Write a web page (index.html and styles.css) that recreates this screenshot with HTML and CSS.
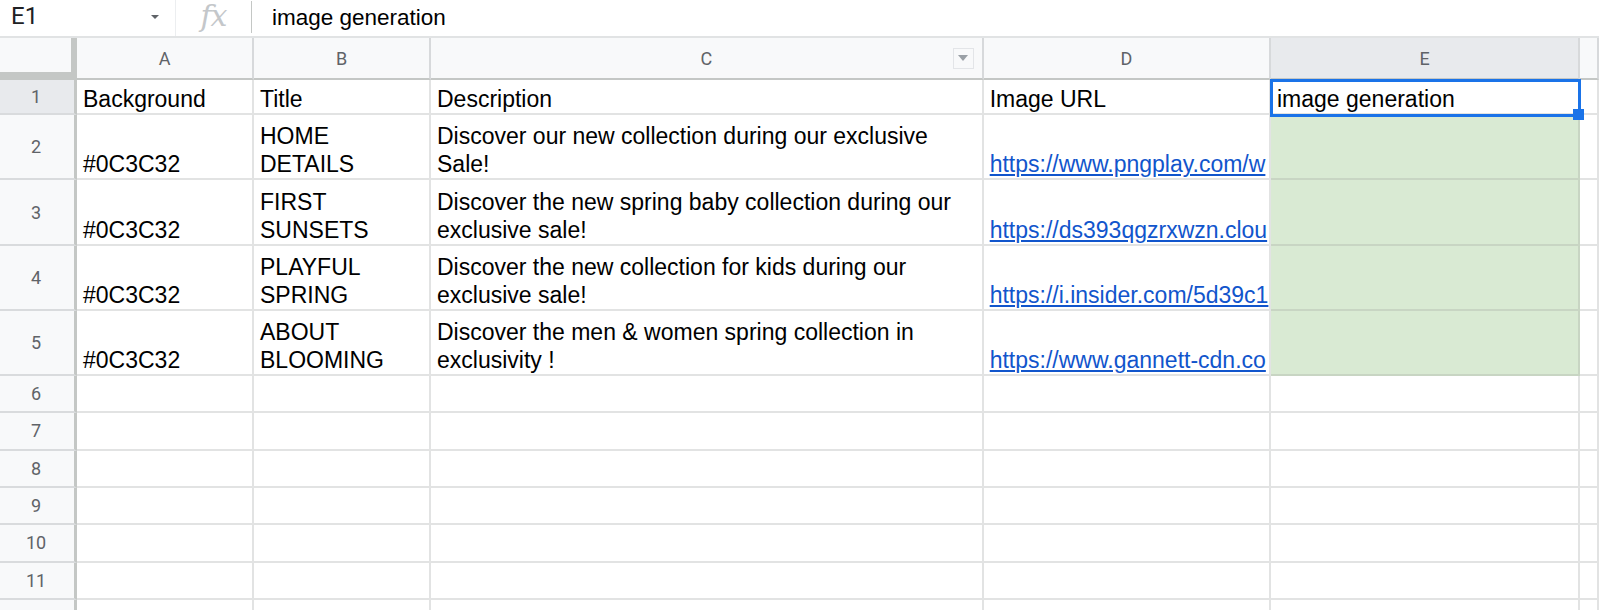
FILE: index.html
```html
<!DOCTYPE html>
<html lang="en">
<head>
<meta charset="utf-8">
<title>Sheet</title>
<link rel="stylesheet" href="styles.css">
</head>
<body>
<div class="formula-bar">
  <div class="namebox"><span>E1</span><span class="arrow"></span></div>
  <div class="fx">fx</div>
  <div class="sep"></div>
  <div class="formula-text">image generation</div>
</div>
<div class="sheet">
  <div class="grid">
    <div class="corner"></div>
    <div class="ch">A</div>
    <div class="ch">B</div>
    <div class="ch filter"><span></span><span>C</span><span class="filter-btn"><span class="tri"></span></span></div>
    <div class="ch">D</div>
    <div class="ch sel">E</div>
    <div class="ch"></div>

    <div class="rh sel">1</div>
    <div class="c">Background</div>
    <div class="c">Title</div>
    <div class="c">Description</div>
    <div class="c">Image URL</div>
    <div class="c">image generation</div>
    <div class="c"></div>

    <div class="rh">2</div>
    <div class="c">#0C3C32</div>
    <div class="c">HOME<br>DETAILS</div>
    <div class="c">Discover our new collection during our exclusive<br>Sale!</div>
    <div class="c"><a href="#">https://www.pngplay.com/w</a></div>
    <div class="c g"></div>
    <div class="c"></div>

    <div class="rh">3</div>
    <div class="c">#0C3C32</div>
    <div class="c">FIRST<br>SUNSETS</div>
    <div class="c">Discover the new spring baby collection during our<br>exclusive sale!</div>
    <div class="c"><a href="#">https://ds393qgzrxwzn.clou</a></div>
    <div class="c g"></div>
    <div class="c"></div>

    <div class="rh">4</div>
    <div class="c">#0C3C32</div>
    <div class="c">PLAYFUL<br>SPRING</div>
    <div class="c">Discover the new collection for kids during our<br>exclusive sale!</div>
    <div class="c"><a href="#">https://i.insider.com/5d39c1</a></div>
    <div class="c g"></div>
    <div class="c"></div>

    <div class="rh">5</div>
    <div class="c">#0C3C32</div>
    <div class="c">ABOUT<br>BLOOMING</div>
    <div class="c">Discover the men &amp; women spring collection in<br>exclusivity !</div>
    <div class="c"><a href="#">https://www.gannett-cdn.co</a></div>
    <div class="c g"></div>
    <div class="c"></div>

    <div class="rh">6</div><div class="c"></div><div class="c"></div><div class="c"></div><div class="c"></div><div class="c"></div><div class="c"></div>
    <div class="rh">7</div><div class="c"></div><div class="c"></div><div class="c"></div><div class="c"></div><div class="c"></div><div class="c"></div>
    <div class="rh">8</div><div class="c"></div><div class="c"></div><div class="c"></div><div class="c"></div><div class="c"></div><div class="c"></div>
    <div class="rh">9</div><div class="c"></div><div class="c"></div><div class="c"></div><div class="c"></div><div class="c"></div><div class="c"></div>
    <div class="rh">10</div><div class="c"></div><div class="c"></div><div class="c"></div><div class="c"></div><div class="c"></div><div class="c"></div>
    <div class="rh">11</div><div class="c"></div><div class="c"></div><div class="c"></div><div class="c"></div><div class="c"></div><div class="c"></div>
    <div class="rh"></div><div class="c"></div><div class="c"></div><div class="c"></div><div class="c"></div><div class="c"></div><div class="c"></div>
  </div>
  <div class="selection"></div>
  <div class="handle"></div>
</div>
</body>
</html>
```
FILE: styles.css
```css
* { box-sizing: border-box; }
html, body { margin: 0; padding: 0; }
body {
  width: 1599px;
  height: 610px;
  overflow: hidden;
  background: #ffffff;
  font-family: "Liberation Sans", Arial, sans-serif;
}

/* formula bar */
.formula-bar {
  display: flex;
  height: 38px;
  border-bottom: 2px solid #e1e3e4;
}
.namebox {
  width: 176px;
  display: flex;
  justify-content: space-between;
  align-items: flex-start;
  padding-left: 11px;
  padding-right: 16px;
  border-right: 1px solid #eceef0;
  font-family: Roboto, "Liberation Sans", sans-serif;
  font-size: 24px;
  line-height: 32px;
  color: #202124;
}
.namebox .arrow {
  margin-top: 15px;
  width: 0;
  height: 0;
  border-left: 4px solid transparent;
  border-right: 4px solid transparent;
  border-top: 4px solid #5f6368;
}
.fx {
  width: 75px;
  text-align: center;
  font-family: "DejaVu Serif", "Liberation Serif", serif;
  font-style: italic;
  font-size: 30px;
  line-height: 32px;
  letter-spacing: -1px;
  color: #c4c7ca;
}
.sep {
  width: 1px;
  height: 32px;
  margin-top: 1px;
  background: #c4c7c5;
}
.formula-text {
  padding-left: 20px;
  font-size: 22.5px;
  line-height: 35px;
  color: #000;
}

/* sheet */
.sheet { position: relative; }
.grid {
  display: grid;
  grid-template-columns: 77px 177px 177px 552.7px 287.3px 309.3px 1fr;
  grid-template-rows: 42px 35.33px repeat(4, 65.17px) repeat(7, 37.33px);
}
.corner {
  background: #f8f9fa;
  border-right: 6px solid #c4c7c5;
  border-bottom: 8px solid #c4c7c5;
}
.ch {
  background: #f8f9fa;
  border-right: 2px solid #d7d9db;
  border-bottom: 2px solid #c4c7c5;
  display: flex;
  align-items: center;
  justify-content: center;
  font-family: Roboto, sans-serif;
  font-size: 18px;
  color: #5f6368;
}
.ch.sel, .rh.sel { background: #e8eaed; }
.ch.filter {
  display: grid;
  grid-template-columns: 1fr auto 1fr;
  align-items: center;
}
.filter-btn {
  justify-self: end;
  margin-right: 8px;
  width: 21px;
  height: 21px;
  border: 1px solid #e3e5e8;
  display: flex;
  align-items: center;
  justify-content: center;
}
.filter-btn .tri {
  width: 0;
  height: 0;
  border-left: 5px solid transparent;
  border-right: 5px solid transparent;
  border-top: 6px solid #9aa0a6;
}
.rh {
  background: #f8f9fa;
  border-right: 3px solid #c4c7c5;
  border-bottom: 2px solid #d9dbdd;
  display: flex;
  align-items: center;
  justify-content: center;
  padding-right: 2px;
  font-family: Roboto, sans-serif;
  font-size: 18px;
  color: #5f6368;
}
.c {
  border-right: 2px solid #e2e3e3;
  border-bottom: 2px solid #e2e3e3;
  padding: 0 6px;
  overflow: hidden;
  white-space: nowrap;
  display: flex;
  flex-direction: column;
  justify-content: flex-end;
  font-size: 23px;
  line-height: 28px;
  color: #000;
}
.c a {
  color: #1155cc;
  text-decoration: underline;
}
.c.g {
  background: #d9ead3;
  border-color: #c8d5c3;
}

/* selection overlay */
.selection {
  position: absolute;
  left: 1269.5px;
  top: 41px;
  width: 311px;
  height: 37.5px;
  border: 3px solid #1a73e8;
}
.handle {
  position: absolute;
  left: 1573px;
  top: 71px;
  width: 11px;
  height: 11px;
  background: #1a73e8;
}
```
